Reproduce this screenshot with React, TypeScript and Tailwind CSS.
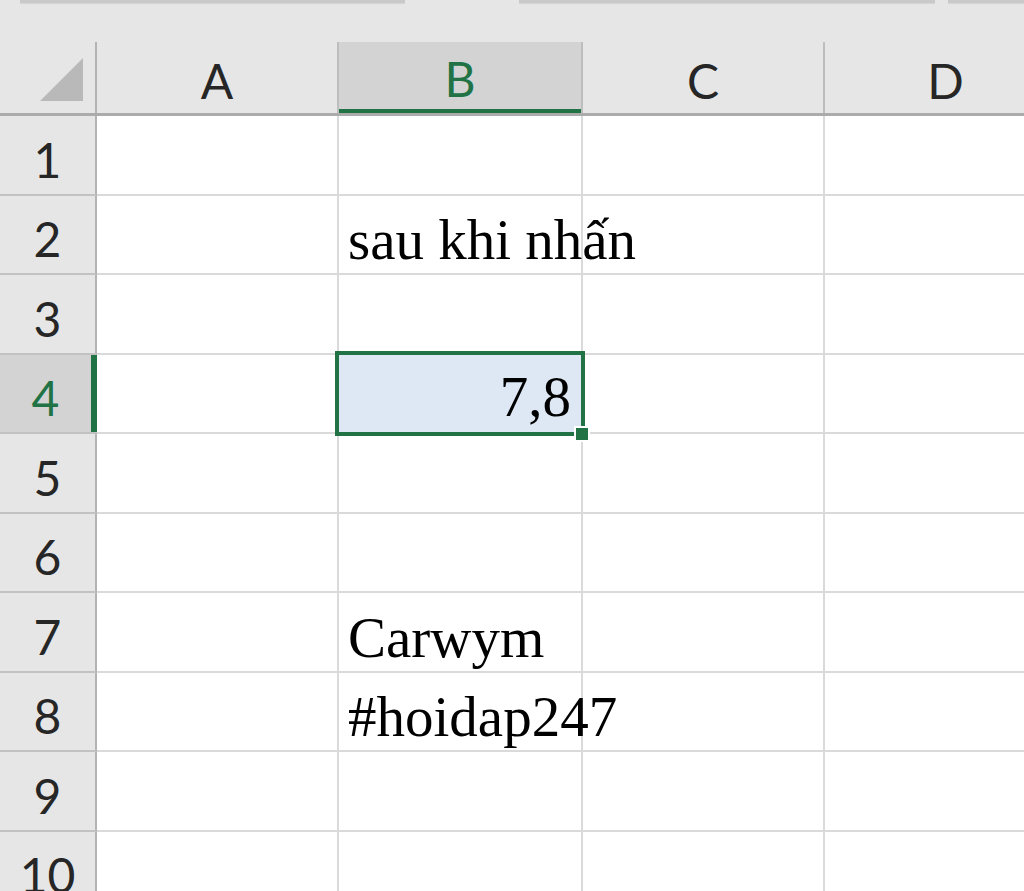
const COLS = ['A', 'B', 'C', 'D']
const ROWS = [1, 2, 3, 4, 5, 6, 7, 8, 9, 10]

const cells: Record<string, string> = {
  B2: 'sau khi nhấn',
  B7: 'Carwym',
  B8: '#hoidap247',
}

const grid = 'grid grid-cols-[97px_242px_244px_242px_243px]'

export default function App() {
  return (
    <div className="w-[1024px] h-[891px] overflow-hidden bg-white font-['Lato','Liberation_Sans',sans-serif]">
      <div className="h-[42px] bg-[#e6e6e6] flex items-start">
        <div className="ml-[20px] w-[385px] h-[3px] bg-[#c9c9c9] shadow-[0_1px_1px_rgba(0,0,0,0.08)]" />
        <div className="ml-[114px] w-[416px] h-[3px] bg-[#c9c9c9] shadow-[0_1px_1px_rgba(0,0,0,0.08)]" />
        <div className="ml-[13px] flex-1 h-[3px] bg-[#c9c9c9] shadow-[0_1px_1px_rgba(0,0,0,0.08)]" />
      </div>

      <div className={`${grid} h-[74px] bg-[#e6e6e6] border-b-[3px] border-[#ababab]`}>
        <div className="border-r-[2px] border-[#b3b3b3] relative">
          <svg className="absolute left-0 top-0" width="95" height="71" viewBox="0 0 95 71">
            <polygon points="40,59 83,16 83,59" fill="#b9b9b9" />
          </svg>
        </div>
        {COLS.map((c) => (
          <div
            key={c}
            className={
              c === 'B'
                ? 'bg-[#d3d3d3] border-r-[2px] border-[#bdbdbd] flex flex-col'
                : 'border-r-[2px] border-[#bdbdbd] flex flex-col'
            }
          >
            <div
              className={
                c === 'B'
                  ? 'flex-1 flex items-center justify-center pt-[6px] text-[48px] leading-none text-[#217346]'
                  : 'flex-1 flex items-center justify-center pt-[6px] text-[48px] leading-none text-[#262626]'
              }
            >
              {c}
            </div>
            {c === 'B' && <div className="h-[4px] bg-[#217346]" />}
          </div>
        ))}
      </div>

      {ROWS.map((r) => (
        <div key={r} className={`${grid} h-[79.5px]`}>
          <div
            className={
              r === 4
                ? 'bg-[#d3d3d3] border-b-[2px] border-[#c2c2c2] flex'
                : 'bg-[#e6e6e6] border-b-[2px] border-r-[2px] border-[#c2c2c2] border-r-[#b3b3b3] flex'
            }
          >
            <div
              className={
                r === 4
                  ? 'flex-1 flex items-center justify-center pt-[10px] text-[48px] leading-none text-[#217346]'
                  : 'flex-1 flex items-center justify-center pt-[10px] text-[48px] leading-none text-[#262626]'
              }
            >
              {r}
            </div>
            {r === 4 && <div className="w-[6px] bg-[#217346]" />}
          </div>
          {COLS.map((c) => {
            const id = `${c}${r}`
            if (id === 'B4') {
              return (
                <div key={id} className="relative border-r-[2px] border-b-[2px] border-[#dadada]">
                  <div className="absolute -left-[4px] -top-[4px] right-[-4px] bottom-[-4px] border-[4px] border-[#217346] bg-[#dde8f4] flex items-end justify-end pr-[10px] pb-[7px] font-['Liberation_Serif',serif] text-[57px] leading-none text-black z-10">
                    7,8
                  </div>
                  <div className="absolute right-[-9px] bottom-[-10px] w-[16px] h-[16px] bg-[#217346] border-[2px] border-white z-20" />
                </div>
              )
            }
            return (
              <div
                key={id}
                className="border-r-[2px] border-b-[2px] border-[#dadada] flex items-end pl-[9px] pb-[5px] overflow-visible whitespace-nowrap font-['Liberation_Serif',serif] text-[57px] leading-none text-black"
              >
                {cells[id] ?? ''}
              </div>
            )
          })}
        </div>
      ))}
    </div>
  )
}
